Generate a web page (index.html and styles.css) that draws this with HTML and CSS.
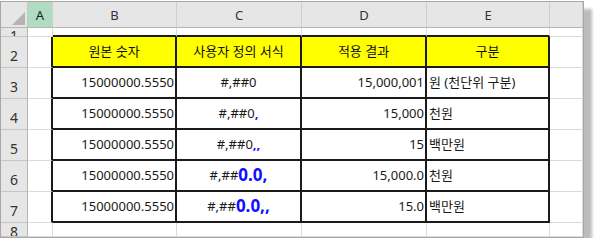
FILE: index.html
```html
<!DOCTYPE html>
<html lang="ko">
<head>
<meta charset="utf-8">
<link rel="stylesheet" href="styles.css">
</head>
<body>
<div class="win">
  <div class="sheet">
    <div class="corner"><svg class="tri" width="13" height="13" viewBox="0 0 13 13"><polygon points="13,0 13,13 0,13" fill="#b4b4b4"/></svg></div>
    <div class="ch sel">A</div>
    <div class="ch">B</div>
    <div class="ch">C</div>
    <div class="ch">D</div>
    <div class="ch">E</div>
    <div class="ch"></div>

    <div class="rh r1">1</div>
    <div class="c"></div>
    <div class="c top"></div>
    <div class="c top"></div>
    <div class="c top"></div>
    <div class="c top"></div>
    <div class="c"></div>

    <div class="rh">2</div>
    <div class="c a"></div>
    <div class="c t hd">원본 숫자</div>
    <div class="c t hd">사용자 정의 서식</div>
    <div class="c t hd">적용 결과</div>
    <div class="c t hd">구분</div>
    <div class="c"></div>

    <div class="rh">3</div>
    <div class="c a"></div>
    <div class="c t num">15000000.5550</div>
    <div class="c t ctr">#,##0</div>
    <div class="c t num">15,000,001</div>
    <div class="c t txt">원 (천단위 구분)</div>
    <div class="c"></div>

    <div class="rh">4</div>
    <div class="c a"></div>
    <div class="c t num">15000000.5550</div>
    <div class="c t ctr">#,##0<b class="blue">,</b></div>
    <div class="c t num">15,000</div>
    <div class="c t txt">천원</div>
    <div class="c"></div>

    <div class="rh">5</div>
    <div class="c a"></div>
    <div class="c t num">15000000.5550</div>
    <div class="c t ctr">#,##0<b class="blue">,,</b></div>
    <div class="c t num">15</div>
    <div class="c t txt">백만원</div>
    <div class="c"></div>

    <div class="rh">6</div>
    <div class="c a"></div>
    <div class="c t num">15000000.5550</div>
    <div class="c t ctr">#,##<b class="blue big">0.0,</b></div>
    <div class="c t num">15,000.0</div>
    <div class="c t txt">천원</div>
    <div class="c"></div>

    <div class="rh">7</div>
    <div class="c a"></div>
    <div class="c t num">15000000.5550</div>
    <div class="c t ctr">#,##<b class="blue big">0.0,,</b></div>
    <div class="c t num">15.0</div>
    <div class="c t txt">백만원</div>
    <div class="c"></div>

    <div class="rh r8">8</div>
    <div class="c"></div>
    <div class="c"></div>
    <div class="c"></div>
    <div class="c"></div>
    <div class="c"></div>
    <div class="c"></div>
  </div>
</div>
</body>
</html>
```

FILE: styles.css
```css
* { box-sizing: border-box; }
html, body { margin: 0; padding: 0; background: #fff; }
body {
  font-family: "Noto Sans", "Noto Sans CJK KR", sans-serif;
  font-size: 13px;
  color: #1a1a1a;
}
.win {
  margin-top: 1px;
  width: 584px;
  height: 237px;
  border: 1px solid #a8a8a8;
  box-shadow: 8px 8px 3px #bcbcbc;
  background: #fff;
  overflow: hidden;
}
.sheet {
  display: grid;
  grid-template-columns: 27px 25px 124px 125px 125px 123px 33px;
  grid-template-rows: 26px 9px 31px 31px 31px 31px 31px 31px 14px;
}
.corner {
  background: #e6e6e6;
  border-right: 1px solid #c6c6c6;
  border-bottom: 1px solid #b4b4b4;
  position: relative;
}
.tri { position: absolute; right: 2px; bottom: 2px; }
.ch {
  background: #e6e6e6;
  border-right: 1px solid #cfcfcf;
  border-bottom: 1px solid #b4b4b4;
  display: flex;
  align-items: center;
  justify-content: center;
  color: #333;
  font-size: 13px;
  padding-top: 1px;
}
.ch.sel { background: #afdcc2; color: #222; }
.rh {
  background: #e6e6e6;
  border-right: 1px solid #b4b4b4;
  border-bottom: 1px solid #c6c6c6;
  display: flex;
  align-items: flex-end;
  justify-content: center;
  color: #333;
  font-size: 14px;
  line-height: 16px;
  padding-bottom: 3px;
  overflow: hidden;
}
.rh.r1 { align-items: flex-start; padding: 0; line-height: 16px; }
.rh.r1 { padding-top: 0; }
.rh.r8 { align-items: flex-start; padding-top: 1px; }
.c {
  border-right: 1px solid #dadada;
  border-bottom: 1px solid #dadada;
  display: flex;
  align-items: center;
  white-space: nowrap;
  overflow: hidden;
  padding-bottom: 2px;
}
.c.top { border-bottom: 2px solid #1a1a1a; }
.c.a { border-right: 2px solid #1a1a1a; }
.c.t {
  border-right: 2px solid #1a1a1a;
  border-bottom: 2px solid #1a1a1a;
}
.hd { background: #ffff00; justify-content: center; color: #111; }
.num { justify-content: flex-end; padding-right: 1px; }
.ctr { justify-content: center; }
.txt { justify-content: flex-start; padding-left: 2px; }
.blue { color: #1010ff; font-weight: 700; }
.big { font-size: 17px; line-height: 16px; }
```
